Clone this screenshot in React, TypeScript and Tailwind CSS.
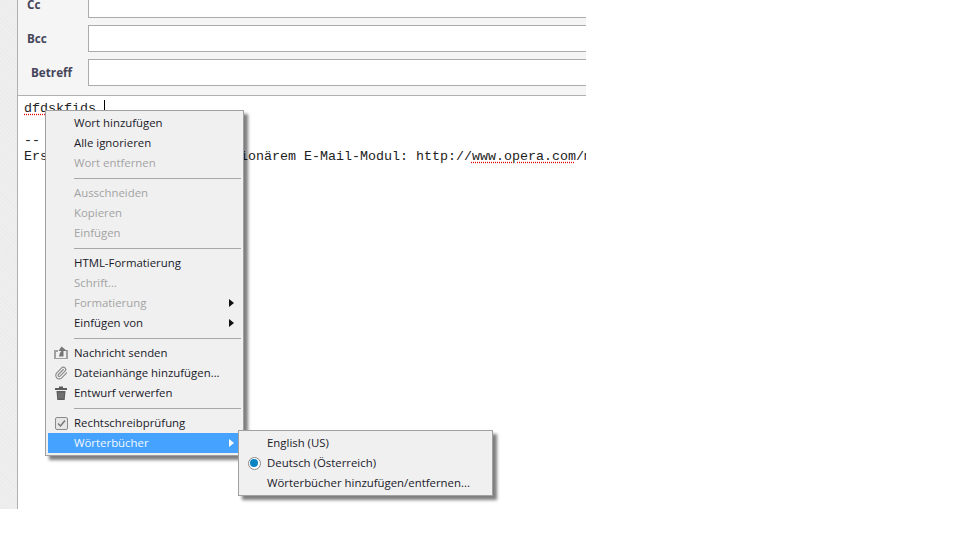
import { Paperclip } from "lucide-react";
import { ReactNode } from "react";

const font = "font-['Open_Sans','Noto_Sans',sans-serif]";

function Arrow({ white }: { white?: boolean }) {
  return (
    <svg width="5" height="8" viewBox="0 0 5 8" className="ml-auto mr-[8px]">
      <path d="M0 0 L5 4 L0 8 Z" fill={white ? "#ffffff" : "#111111"} />
    </svg>
  );
}

function SendIcon() {
  return (
    <svg width="16" height="16" viewBox="0 0 16 16">
      <path d="M1 5h4v2H3v6h10V5h2v9H1z" fill="#a0a0a0" />
      <path d="M8.5 1.5 L14 6 L10.5 6 L10.5 11.5 L6 11.5 C6.5 9 7 7 8.5 6 L5.5 6 Z" fill="#757575" />
    </svg>
  );
}

function TrashIcon() {
  return (
    <svg width="14" height="14" viewBox="0 0 14 14">
      <path d="M5 0.5h4V2h4v2H1V2h4z" fill="#5c5c5c" />
      <path d="M2.5 5h9l-.8 9H3.3z" fill="#5c5c5c" />
      <path d="M5 6.5v6M7 6.5v6M9 6.5v6" stroke="#8c8c8c" strokeWidth="0.8" />
    </svg>
  );
}

function CheckIcon() {
  return (
    <div className="w-[13px] h-[13px] rounded-[2px] border border-[#8a8a8a] bg-[#e6e6e6] flex items-center justify-center">
      <svg width="9" height="9" viewBox="0 0 9 9">
        <path d="M1 4.5 L3.5 7 L8 1.5" fill="none" stroke="#777777" strokeWidth="1.5" />
      </svg>
    </div>
  );
}

function RadioIcon() {
  return (
    <div className="w-[13px] h-[13px] rounded-full border border-[#888] bg-white flex items-center justify-center">
      <div className="w-[8px] h-[8px] rounded-full bg-[#0a84c4]" />
    </div>
  );
}

function Item({
  label,
  off,
  arrow,
  icon,
  active,
}: {
  label: string;
  off?: boolean;
  arrow?: boolean;
  icon?: ReactNode;
  active?: boolean;
}) {
  return (
    <div
      className={`flex items-center h-[20px] mr-[1px] ${
        active ? "bg-[#45a2ff] text-[#f4f9ff]" : off ? "text-[#a3a3a3]" : "text-[#1a1a2a]"
      }`}
    >
      <div className="w-[26px] flex justify-center shrink-0">{icon}</div>
      <span>{label}</span>
      {arrow && <Arrow white={active} />}
    </div>
  );
}

function Sep() {
  return <div className="h-[1px] bg-[#a8a8a8] ml-[26px] mr-[2px] my-[4.5px]" />;
}

export default function App() {
  return (
    <div className="relative w-[960px] h-[540px] bg-white overflow-hidden">
      <div className="flex w-[586px] h-[509px]">
        <div className="w-[18px] shrink-0 border-r border-[#b0b0b0] bg-[repeating-linear-gradient(45deg,#efefef_0px,#efefef_1px,#ebebeb_2px,#ebebeb_3px)]" />
        <div className="flex-1 min-w-0 flex flex-col">
          <div className="h-[96px] shrink-0 bg-[#f5f5f5] border-b border-[#b0b0b0] overflow-hidden">
            <div className={`-mt-[9px] flex flex-col gap-[7px] ${font} text-[11.7px] font-bold text-[#45455a]`}>
              {[
                { label: "Cc", cls: "pl-[9px]" },
                { label: "Bcc", cls: "pl-[9px]" },
                { label: "Betreff", cls: "pl-[13px]" },
              ].map((row) => (
                <div key={row.label} className="flex items-center h-[27px]">
                  <div className={`w-[70px] shrink-0 ${row.cls}`}>{row.label}</div>
                  <div className="flex-1 h-full bg-white border border-r-0 border-[#ababab]" />
                </div>
              ))}
            </div>
          </div>
          <div className="flex-1 min-h-0 overflow-hidden bg-white pl-[6px] pt-[5px] font-['Liberation_Mono',monospace] text-[13.33px] leading-[16px] text-[#222] whitespace-pre">
            <div className="flex items-start h-[16px]">
              <span className="underline decoration-dotted decoration-[#e80000] underline-offset-[2px]">dfdskfids</span>
              <span className="ml-[8px] -mt-[1px] w-[1px] h-[15px] bg-black" />
            </div>
            <div className="h-[16px]" />
            <div>-- </div>
            <div>
              Erstellt mit Operas revolutionärem E-Mail-Modul: http://
              <span className="underline decoration-dotted decoration-[#e80000] underline-offset-[2px]">www.opera.com</span>
              /mail/
            </div>
          </div>
        </div>
      </div>

      <div
        className={`absolute left-[45px] top-[110px] w-[199px] bg-[#f0f0f0] border border-[#a0a0a0] pl-[2px] py-[2px] shadow-[4px_4px_3px_rgba(0,0,0,0.5)] ${font} text-[11.4px]`}
      >
        <Item label="Wort hinzufügen" />
        <Item label="Alle ignorieren" />
        <Item label="Wort entfernen" off />
        <Sep />
        <Item label="Ausschneiden" off />
        <Item label="Kopieren" off />
        <Item label="Einfügen" off />
        <Sep />
        <Item label="HTML-Formatierung" />
        <Item label="Schrift..." off />
        <Item label="Formatierung" off arrow />
        <Item label="Einfügen von" arrow />
        <Sep />
        <Item label="Nachricht senden" icon={<SendIcon />} />
        <Item label="Dateianhänge hinzufügen..." icon={<Paperclip size={14} strokeWidth={2} className="text-[#8a8a8a]" />} />
        <Item label="Entwurf verwerfen" icon={<TrashIcon />} />
        <Sep />
        <Item label="Rechtschreibprüfung" icon={<CheckIcon />} />
        <Item label="Wörterbücher" arrow active />
      </div>

      <div
        className={`absolute left-[238px] top-[430px] w-[255px] bg-[#f0f0f0] border border-[#a0a0a0] pl-[2px] py-[2px] shadow-[4px_4px_3px_rgba(0,0,0,0.5)] ${font} text-[11.4px]`}
      >
        <Item label="English (US)" />
        <Item label="Deutsch (Österreich)" icon={<RadioIcon />} />
        <Item label="Wörterbücher hinzufügen/entfernen..." />
      </div>
    </div>
  );
}
